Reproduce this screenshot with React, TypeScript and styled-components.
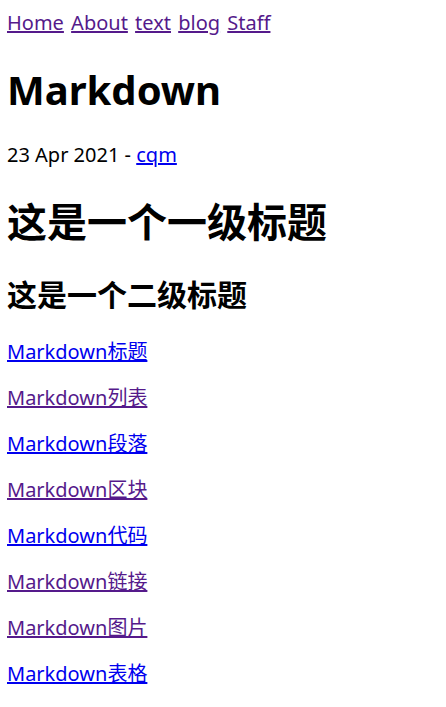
import * as React from "react";
import styled, { createGlobalStyle } from "styled-components";

const GlobalStyle = createGlobalStyle`
  body {
    margin: 9px 8px 8px 7px;
    background: #ffffff;
    color: #000000;
    font-family: "Noto Sans", "Noto Sans CJK SC", sans-serif;
    font-size: 20px;
    line-height: 26px;
  }
`;

const navItems = ["Home", "About", "text", "blog", "Staff"];

const posts = [
  { title: "Markdown标题", visited: false },
  { title: "Markdown列表", visited: true },
  { title: "Markdown段落", visited: false },
  { title: "Markdown区块", visited: true },
  { title: "Markdown代码", visited: false },
  { title: "Markdown链接", visited: true },
  { title: "Markdown图片", visited: true },
  { title: "Markdown表格", visited: false },
];

function App() {
  return (
    <>
      <GlobalStyle />
      <Nav>
        {navItems.map((item, i) => (
          <React.Fragment key={item}>
            {i > 0 && " "}
            <Link href="#" $visited>
              {item}
            </Link>
          </React.Fragment>
        ))}
      </Nav>
      <Title>Markdown</Title>
      <Meta>
        23 Apr 2021 - <Link href="#">cqm</Link>
      </Meta>
      <Heading1>这是一个一级标题</Heading1>
      <Heading2>这是一个二级标题</Heading2>
      {posts.map((post) => (
        <Paragraph key={post.title}>
          <Link href="#" $visited={post.visited}>
            {post.title}
          </Link>
        </Paragraph>
      ))}
    </>
  );
}

const Nav = styled.nav`
  display: block;
  line-height: 28px;
  word-spacing: 2px;
`;

const Link = styled.a<{ $visited?: boolean }>`
  color: ${(props) => (props.$visited ? "#551a8b" : "#0000ee")};
  text-decoration: underline;
`;

const Title = styled.h1`
  font-size: 40px;
  line-height: 53px;
  font-weight: 700;
  margin: 26px 0;
`;

const Meta = styled.p`
  margin: 20px 0;
`;

const Heading1 = styled.h1`
  font-size: 40px;
  line-height: 53px;
  font-weight: 700;
  margin: 26.8px 0;
`;

const Heading2 = styled.h2`
  font-size: 30px;
  line-height: 39.6px;
  font-weight: 700;
  margin: 24.9px 0;
`;

const Paragraph = styled.p`
  margin: 20px 0;
`;

export default App;
